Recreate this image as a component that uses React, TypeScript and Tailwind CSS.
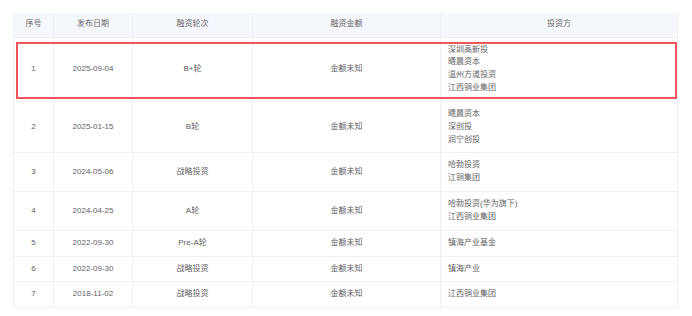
import React from "react";

type Row = { no: number; date: string; round: string; amount: string; investors: string[] };

const rows: Row[] = [
  { no: 1, date: "2025-09-04", round: "B+轮", amount: "金额未知", investors: ["深圳高新投", "曦晨资本", "温州方道投资", "江西铜业集团"] },
  { no: 2, date: "2025-01-15", round: "B轮", amount: "金额未知", investors: ["曦晨资本", "深创投", "润宁创投"] },
  { no: 3, date: "2024-05-06", round: "战略投资", amount: "金额未知", investors: ["哈勃投资", "江铜集团"] },
  { no: 4, date: "2024-04-25", round: "A轮", amount: "金额未知", investors: ["哈勃投资(华为旗下)", "江西铜业集团"] },
  { no: 5, date: "2022-09-30", round: "Pre-A轮", amount: "金额未知", investors: ["镇海产业基金"] },
  { no: 6, date: "2022-09-30", round: "战略投资", amount: "金额未知", investors: ["镇海产业"] },
  { no: 7, date: "2018-11-02", round: "战略投资", amount: "金额未知", investors: ["江西铜业集团"] },
];

export default function App() {
  const font = { fontFamily: '"Liberation Sans", "Noto Sans CJK SC", sans-serif' };
  const th = "h-[24px] border-b border-r border-[#edf0f5] font-normal text-center align-middle";
  const td = "py-[6px] border-b border-r border-[#edf0f5] text-center align-middle";
  return (
    <div className="w-[692px] h-[316px] bg-white pt-[13px] pl-[13px]" style={font}>
      <div className="relative w-[664px]">
        <table className="w-[664px] table-fixed border-l border-[#edf0f5] text-[8px] leading-[12.85px] text-[#5f6166]">
          <colgroup>
            <col className="w-[40px]" />
            <col className="w-[79px]" />
            <col className="w-[120px]" />
            <col className="w-[188px]" />
            <col className="w-[237px]" />
          </colgroup>
          <thead>
            <tr className="bg-[#f4f7fb] text-[#666]">
              <th className={th}>序号</th>
              <th className={th}>发布日期</th>
              <th className={th}>融资轮次</th>
              <th className={th}>融资金额</th>
              <th className={th}>投资方</th>
            </tr>
          </thead>
          <tbody>
            {rows.map((r) => (
              <tr key={r.no}>
                <td className={td}>{r.no}</td>
                <td className={td}>{r.date}</td>
                <td className={td}>{r.round}</td>
                <td className={td}>{r.amount}</td>
                <td className="py-[6px] pl-[7px] border-b border-r border-[#edf0f5] text-left align-middle">
                  {r.investors.map((inv) => (
                    <div key={inv}>{inv}</div>
                  ))}
                </td>
              </tr>
            ))}
          </tbody>
        </table>
        <div className="absolute left-[3px] top-[29px] w-[661px] h-[57px] border-2 border-[#f0565c] pointer-events-none" />
      </div>
    </div>
  );
}
